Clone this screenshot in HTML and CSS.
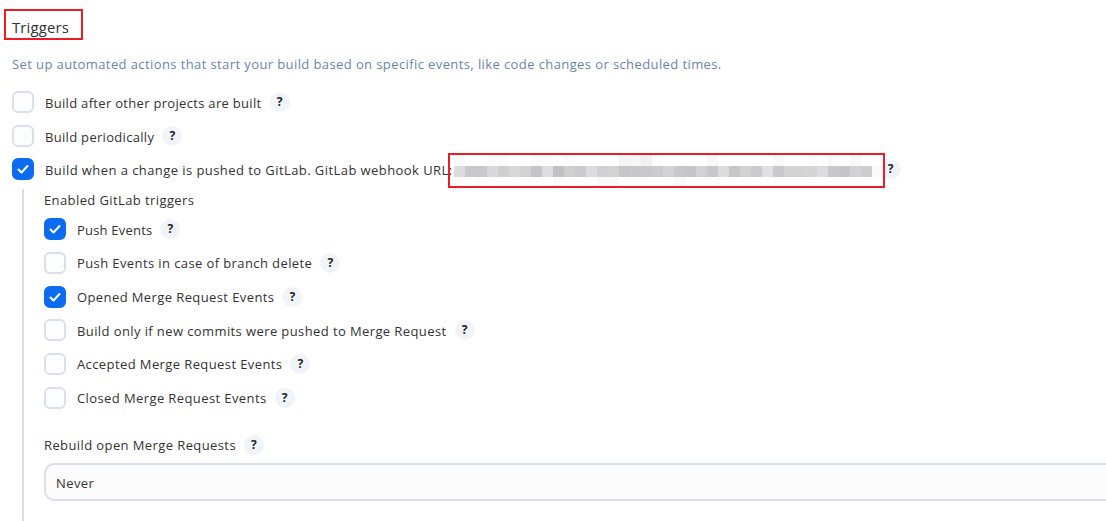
FILE: index.html
```html
<!DOCTYPE html>
<html lang="en">
<head>
<meta charset="utf-8">
<title>Triggers</title>
<link rel="stylesheet" href="styles.css">
</head>
<body>
<main class="page">
  <h2 class="title"><span class="mark">Triggers</span></h2>
  <p class="desc">Set up automated actions that start your build based on specific events, like code changes or scheduled times.</p>
  <div class="rows">
    <div class="row"><span class="box"></span><span class="label tight">Build after other projects are built</span><span class="help">?</span></div>
    <div class="row"><span class="box"></span><span class="label tight">Build periodically</span><span class="help">?</span></div>
    <div class="row"><span class="box on"><svg viewBox="0 0 22 22" class="tick"><path d="M6.5 11.5l3 3 6-6.5"/></svg></span><span class="label url-label">Build when a change is pushed to GitLab. GitLab webhook URL:</span><span class="url">
      <svg class="blur" viewBox="0 0 437 35" width="437" height="35" shape-rendering="crispEdges">
        <g class="t">
          <rect x="6" y="2" width="11" height="11" fill="#fafafa"/><rect x="39" y="2" width="22" height="11" fill="#fbfbfb"/><rect x="83" y="2" width="22" height="11" fill="#fbfbfb"/><rect x="116" y="2" width="11" height="11" fill="#fbfbfb"/><rect x="171" y="2" width="11" height="11" fill="#f5f5f5"/><rect x="182" y="2" width="11" height="11" fill="#f6f6f6"/><rect x="193" y="2" width="11" height="11" fill="#f1f1f1"/><rect x="204" y="2" width="11" height="11" fill="#fbfbfb"/><rect x="259" y="2" width="11" height="11" fill="#f8f8f8"/><rect x="325" y="2" width="11" height="11" fill="#f9f9f9"/><rect x="358" y="2" width="11" height="11" fill="#fbfbfb"/><rect x="380" y="2" width="11" height="11" fill="#fafafa"/><rect x="402" y="2" width="11" height="11" fill="#f8f8f8"/>
          <rect x="28" y="24" width="11" height="9" fill="#fcfcfc"/><rect x="105" y="24" width="11" height="9" fill="#fbfbfb"/><rect x="149" y="24" width="22" height="9" fill="#f9f9f9"/><rect x="226" y="24" width="11" height="9" fill="#f9f9f9"/>
        </g>
        <g>
          <rect x="6" y="13" width="11" height="11" fill="#dcdcdc"/><rect x="17" y="13" width="22" height="11" fill="#c9c9cb"/><rect x="39" y="13" width="11" height="11" fill="#d9d9d9"/><rect x="50" y="13" width="11" height="11" fill="#cfcfcf"/><rect x="61" y="13" width="11" height="11" fill="#d8d8d8"/><rect x="72" y="13" width="11" height="11" fill="#d2d2d2"/><rect x="83" y="13" width="11" height="11" fill="#c5c5c7"/><rect x="94" y="13" width="11" height="11" fill="#dddde0"/><rect x="105" y="13" width="11" height="11" fill="#c1c1c4"/><rect x="116" y="13" width="11" height="11" fill="#cfcfcf"/><rect x="127" y="13" width="11" height="11" fill="#cbcbcd"/><rect x="138" y="13" width="11" height="11" fill="#dcdcdc"/><rect x="149" y="13" width="11" height="11" fill="#d0d0d2"/><rect x="160" y="13" width="11" height="11" fill="#d2d2d2"/><rect x="171" y="13" width="11" height="11" fill="#c6c6c8"/><rect x="182" y="13" width="11" height="11" fill="#c8c8ca"/><rect x="193" y="13" width="11" height="11" fill="#c9c9cb"/><rect x="204" y="13" width="11" height="11" fill="#cbcbcd"/><rect x="215" y="13" width="11" height="11" fill="#d3d3d3"/><rect x="226" y="13" width="11" height="11" fill="#c9c9cb"/><rect x="237" y="13" width="11" height="11" fill="#c6c6c8"/><rect x="248" y="13" width="11" height="11" fill="#d2d2d2"/><rect x="259" y="13" width="11" height="11" fill="#c8c8ca"/><rect x="270" y="13" width="11" height="11" fill="#dcdcdc"/><rect x="281" y="13" width="11" height="11" fill="#c6c6c8"/><rect x="292" y="13" width="11" height="11" fill="#d2d2d2"/><rect x="303" y="13" width="11" height="11" fill="#cbcbcd"/><rect x="314" y="13" width="11" height="11" fill="#e0e0e0"/><rect x="325" y="13" width="11" height="11" fill="#c9c9cb"/><rect x="336" y="13" width="22" height="11" fill="#d3d3d3"/><rect x="358" y="13" width="11" height="11" fill="#d5d5d5"/><rect x="369" y="13" width="11" height="11" fill="#dcdcdf"/><rect x="380" y="13" width="11" height="11" fill="#c8c8ca"/><rect x="391" y="13" width="11" height="11" fill="#c6c6c6"/><rect x="402" y="13" width="11" height="11" fill="#d2d2d4"/><rect x="413" y="13" width="11" height="11" fill="#cdcdcd"/><rect x="424" y="13" width="11" height="11" fill="#f9f9f9"/>
        </g>
        <rect class="redbox" x="1" y="1" width="435" height="33"/>
      </svg>
    </span><span class="help">?</span></div>
  </div>
  <section class="nested">
    <div class="caption">Enabled GitLab triggers</div>
    <div class="rows">
      <div class="row"><span class="box on"><svg viewBox="0 0 22 22" class="tick"><path d="M6.5 11.5l3 3 6-6.5"/></svg></span><span class="label tighter">Push Events</span><span class="help">?</span></div>
      <div class="row"><span class="box"></span><span class="label">Push Events in case of branch delete</span><span class="help">?</span></div>
      <div class="row"><span class="box on"><svg viewBox="0 0 22 22" class="tick"><path d="M6.5 11.5l3 3 6-6.5"/></svg></span><span class="label">Opened Merge Request Events</span><span class="help">?</span></div>
      <div class="row"><span class="box"></span><span class="label">Build only if new commits were pushed to Merge Request</span><span class="help">?</span></div>
      <div class="row"><span class="box"></span><span class="label">Accepted Merge Request Events</span><span class="help">?</span></div>
      <div class="row"><span class="box"></span><span class="label">Closed Merge Request Events</span><span class="help">?</span></div>
    </div>
    <div class="field-label"><span>Rebuild open Merge Requests</span><span class="help">?</span></div>
    <div class="select">Never</div>
  </section>
</main>
</body>
</html>
```
FILE: styles.css
```css
*, *::before, *::after { box-sizing: border-box; }
html, body { margin: 0; height: 100%; overflow: hidden; background: #fff; }
body { font-family: "Open Sans", "Noto Sans", sans-serif; font-size: 13px; letter-spacing: 0.4px; color: #333; }
.page { padding: 9px 0 0 12px; width: 1106px; overflow: hidden; height: 521px; }
.title { margin: 0; font-weight: 400; font-size: 15px; letter-spacing: 0.1px; line-height: 36px; height: 31px; }
.mark { display: inline-block; position: relative; line-height: 36px; }
.mark::after { content: ""; position: absolute; left: -8px; top: 0; width: 79px; height: 31px; border: 2px solid #ed1c24; }
.desc { margin: 14px 0 0; line-height: 20px; color: #6a86b0; }
.rows { display: flex; flex-direction: column; gap: 11.67px; }
.page > .rows { margin-top: 17px; }
.row { display: flex; align-items: center; height: 22px; }
.box { flex: none; width: 22px; height: 22px; border: 2px solid #d7e0ec; border-radius: 6px; background: #fcfdfe; }
.box.on { border-color: #0b6cf0; background: #0b6cf0; position: relative; }
.tick { position: absolute; left: -2px; top: -2px; width: 22px; height: 22px; }
.tick path { fill: none; stroke: #fff; stroke-width: 2; stroke-linecap: round; stroke-linejoin: round; }
.label { margin-left: 11px; padding-top: 2px; }
.nested .label { padding-top: 1px; }
.tight { letter-spacing: 0.31px; }
.tighter { letter-spacing: 0.2px; }
.url-label { letter-spacing: 0.43px; }
.help { flex: none; width: 20px; height: 20px; margin-left: 8px; border-radius: 50%; background: #f0f4f9; font-family: "Noto Sans", sans-serif; font-size: 12px; font-weight: 700; letter-spacing: 0; line-height: 20px; text-align: center; color: #222; }
.url { flex: none; width: 420px; align-self: stretch; position: relative; }
.blur { position: absolute; left: -5px; top: -5px; z-index: 1; }
.redbox { fill: none; stroke: #ed1c24; stroke-width: 2; }
.nested { margin: 9px 0 0 10px; padding: 0 0 0 20px; border-left: 2px solid #d7e0ec; height: 400px; }
.caption { line-height: 22px; margin-bottom: 7px; }
.field-label { display: flex; align-items: center; margin-top: 25px; height: 22px; }
.select { margin-top: 7px; width: 1200px; height: 38px; border: 2px solid #d7e0ec; border-radius: 10px; background: #fcfcfc; padding: 0 10px; line-height: 36px; }
```
